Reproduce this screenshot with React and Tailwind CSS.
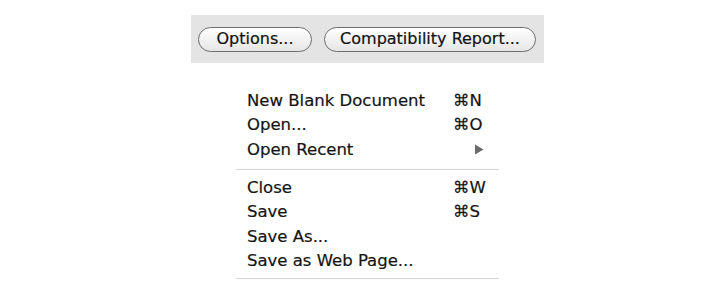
export default function App() {
  const font = { fontFamily: '"DejaVu Sans", "Lucida Grande", sans-serif' };
  const rows1 = [
    ["New Blank Document", "⌘N"],
    ["Open...", "⌘O"],
    ["Open Recent", "tri"],
  ];
  const rows2 = [
    ["Close", "⌘W"],
    ["Save", "⌘S"],
    ["Save As...", ""],
    ["Save as Web Page...", ""],
  ];
  const Row = ({ label, sc }) => (
    <div className="flex h-[24.4px] items-center justify-between pl-[11px] pr-[14px] text-[16.5px] text-[#141414] [-webkit-text-stroke:0.2px_#141414]">
      <span>{label}</span>
      {sc === "tri" ? (
        <svg width="10" height="11" viewBox="0 0 10 11" className="mr-[1px]">
          <path d="M1 0.5 L9.5 5.5 L1 10.5 Z" fill="#6b6b6b" />
        </svg>
      ) : (
        <span className="w-[32px] text-left">{sc}</span>
      )}
    </div>
  );
  const Btn = ({ children, w }) => (
    <div
      className={`flex h-[25px] ${w} items-center justify-center rounded-full border border-[#6e6e6e] bg-gradient-to-b from-white via-[#f2f2f2] to-[#e6e6e6] text-[16px] text-[#111] shadow-[inset_0_1px_0_#fff] [-webkit-text-stroke:0.2px_#111]`}
    >
      {children}
    </div>
  );
  return (
    <div className="h-[294px] w-[718px] bg-white" style={font}>
      <div className="pt-[15px] pl-[191px]">
        <div className="flex h-[48px] w-[353px] items-center gap-[12px] bg-[#e4e4e4] pl-[7px]">
          <Btn w="w-[114px]">Options...</Btn>
          <Btn w="w-[212px]">Compatibility Report...</Btn>
        </div>
      </div>
      <div className="ml-[236px] mt-[26px] w-[263px]">
        <div className="pb-[7px]">
          {rows1.map(([l, s]) => (
            <Row key={l} label={l} sc={s} />
          ))}
        </div>
        <div className="h-px bg-[#d4d4d4]" />
        <div className="pt-[6px] pb-[4px]">
          {rows2.map(([l, s]) => (
            <Row key={l} label={l} sc={s} />
          ))}
        </div>
        <div className="h-px bg-[#d4d4d4]" />
      </div>
    </div>
  );
}
